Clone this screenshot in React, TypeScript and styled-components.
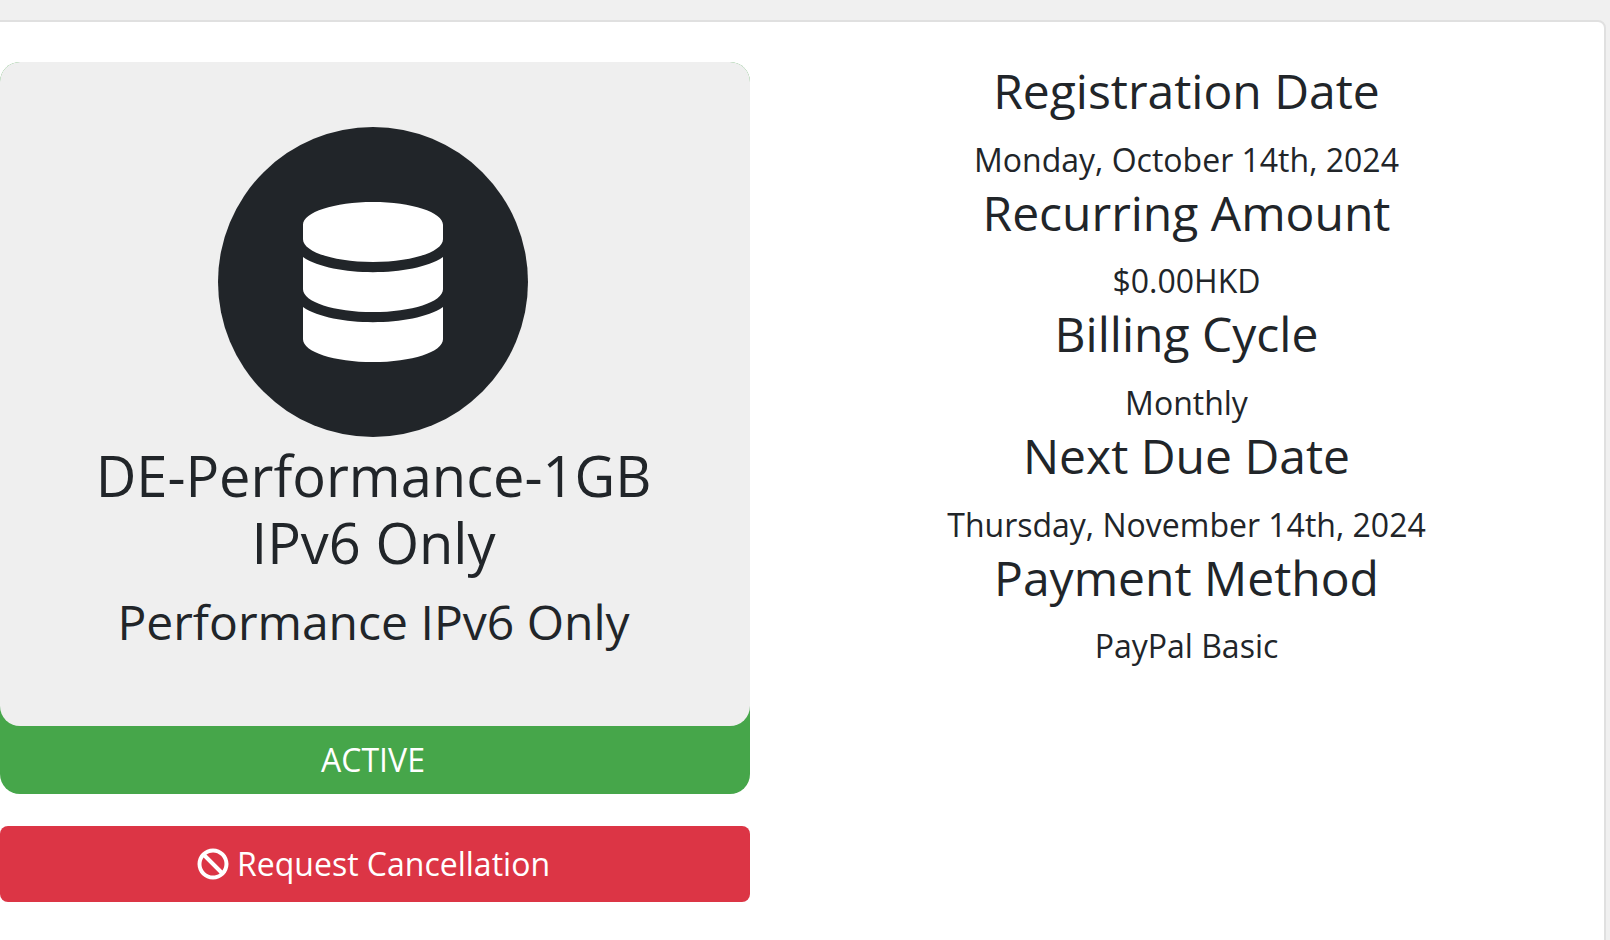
import React from "react";
import styled, { createGlobalStyle } from "styled-components";
import { FaBan, FaDatabase } from "react-icons/fa";

const GlobalStyle = createGlobalStyle`
  html, body {
    margin: 0;
    height: 940px;
    overflow: hidden;
    background: #f0f0f0;
    color: #212529;
    font-family: "Open Sans", "Liberation Sans", sans-serif;
    font-size: 32px;
    line-height: 1.5;
  }
  * { box-sizing: border-box; }
`;

const Panel = styled.main`
  margin: 20px 4px 0 -20px;
  padding: 40px 11px 60px 18px;
  background: #fff;
  border: 2px solid #e0e0e0;
  border-radius: 8px;
  display: grid;
  grid-template-columns: 750px 1fr;
  column-gap: 30px;
  align-items: start;
`;

const ProductColumn = styled.section`
  display: flex;
  flex-direction: column;
  gap: 32px;
`;

const ProductCard = styled.div`
  background: #46a64a;
  border-radius: 20px;
  color: #fff;
  text-align: center;
`;

const ProductBody = styled.div`
  background: #efefef;
  border-radius: 20px;
  color: #212529;
  padding: 65px 3px 59px 0;
  height: 664px;
  display: flex;
  flex-direction: column;
  align-items: center;
`;

const IconCircle = styled.div`
  width: 310px;
  height: 310px;
  border-radius: 50%;
  background: #212529;
  color: #fff;
  display: flex;
  align-items: center;
  justify-content: center;
  font-size: 160px;
  margin: 0 1px 5px 0;
`;

const ProductName = styled.h3`
  margin: 0 0 16.4px;
  font-size: 56px;
  font-weight: 400;
  line-height: 1.2;
`;

const GroupName = styled.h4`
  margin: 0;
  font-size: 48px;
  font-weight: 400;
  line-height: 1.2;
`;

const Status = styled.div`
  padding: 10px 4px 10px 0;
  font-size: 32px;
  line-height: 48px;
`;

const CancelButton = styled.a`
  display: flex;
  align-items: center;
  justify-content: center;
  gap: 8px;
  height: 76px;
  padding-right: 3px;
  background: #dc3545;
  color: #fff;
  border-radius: 8px;
  font-size: 32px;
`;

const Details = styled.section`
  padding-top: 0.2px;
  text-align: center;
`;

const Label = styled.h4`
  margin: 0 0 16px;
  font-size: 48px;
  font-weight: 400;
  line-height: 1.2;
`;

const Value = styled.div`
  font-size: 32px;
  line-height: 48px;
`;

const rows = [
  ["Registration Date", "Monday, October 14th, 2024"],
  ["Recurring Amount", "$0.00HKD"],
  ["Billing Cycle", "Monthly"],
  ["Next Due Date", "Thursday, November 14th, 2024"],
  ["Payment Method", "PayPal Basic"],
];

export default function App() {
  return (
    <>
      <GlobalStyle />
      <Panel>
        <ProductColumn>
          <ProductCard>
            <ProductBody>
              <IconCircle>
                <FaDatabase />
              </IconCircle>
              <ProductName>
                DE-Performance-1GB
                <br />
                IPv6 Only
              </ProductName>
              <GroupName>Performance IPv6 Only</GroupName>
            </ProductBody>
            <Status>ACTIVE</Status>
          </ProductCard>
          <CancelButton>
            <FaBan size={32} />
            Request Cancellation
          </CancelButton>
        </ProductColumn>
        <Details>
          {rows.map(([label, value]) => (
            <React.Fragment key={label}>
              <Label>{label}</Label>
              <Value>{value}</Value>
            </React.Fragment>
          ))}
        </Details>
      </Panel>
    </>
  );
}
